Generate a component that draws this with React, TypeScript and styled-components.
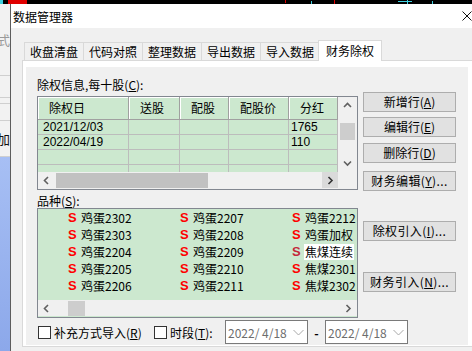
import styled, { createGlobalStyle } from "styled-components";

const GlobalStyle = createGlobalStyle`
  html, body {
    margin: 0;
    padding: 0;
  }
  body {
    width: 472px;
    height: 351px;
    overflow: hidden;
    background: #000;
    font-family: "Noto Sans CJK SC", "Liberation Sans", sans-serif;
    font-size: 12px;
    color: #000;
  }
`;

const Screen = styled.div`
  width: 472px;
  height: 351px;
  display: flex;
  flex-direction: column;
  overflow: hidden;
`;

const Main = styled.div`
  flex: 1;
  display: flex;
  min-height: 0;
`;

/* bit of the app window behind the dialog */
const BackApp = styled.div`
  width: 10px;
  flex: none;
  display: flex;
  flex-direction: column;
  background: #f2f2f2;
  border-right: 1px solid #5c5c5c;
  overflow: hidden;
`;

const BackSeg = styled.div<{ $h: number; $dark?: boolean }>`
  height: ${(p) => p.$h}px;
  flex: none;
  border-bottom: 1px solid #cfcfcf;
  display: flex;
  align-items: center;
  justify-content: flex-end;
  font-size: 13px;
  color: ${(p) => (p.$dark ? "#111" : "#9a9a9a")};
  white-space: nowrap;
`;

const BackBlue = styled.div`
  flex: 1;
  background: linear-gradient(180deg, #a7bff4 0%, #8ca8ea 100%);
`;

const Dialog = styled.div`
  width: 461px;
  flex: none;
  display: flex;
  flex-direction: column;
  background: #f0f0f0;
`;

const TitleBar = styled.div`
  height: 24px;
  flex: none;
  background: #fff;
  display: flex;
  align-items: center;
  justify-content: space-between;
  padding-left: 2px;
  font-size: 12px;
`;

const Body = styled.div`
  flex: 1;
  padding: 12px 0 0 11px;
  display: flex;
  flex-direction: column;
`;

const Tabs = styled.div`
  display: flex;
  align-items: flex-end;
  height: 20px;
  margin-left: 2px;
`;

const Tab = styled.div<{ $active?: boolean }>`
  height: ${(p) => (p.$active ? 21 : 18)}px;
  line-height: ${(p) => (p.$active ? 19 : 17)}px;
  padding: 0 ${(p) => (p.$active ? 7 : 5)}px;
  margin: 0 ${(p) => (p.$active ? -2 : -1)}px ${(p) => (p.$active ? -1 : 0)}px
    ${(p) => (p.$active ? -1 : 0)}px;
  border: 1px solid #d9d9d9;
  border-bottom: none;
  background: ${(p) => (p.$active ? "#fff" : "#f0f0f0")};
  position: relative;
  z-index: ${(p) => (p.$active ? 2 : 1)};
  white-space: nowrap;
  box-sizing: border-box;
`;

const Panel = styled.div`
  height: 287px;
  box-sizing: border-box;
  margin-right: -2px;
  border: 1px solid #d9d9d9;
  background: #fff;
  padding: 6px 5px 1px 3px;
`;

const Page = styled.div`
  height: 278px;
  box-sizing: border-box;
  background: #f0f0f0;
  padding: 9px 0 0 11px;
  display: flex;
  flex-direction: column;
`;

const Upper = styled.div`
  display: flex;
  align-items: flex-start;
`;

const LeftCol = styled.div`
  width: 321px;
  flex: none;
  display: flex;
  flex-direction: column;
`;

const FieldLabel = styled.div<{ $h: number; $lh: number }>`
  height: ${(p) => p.$h}px;
  line-height: ${(p) => p.$lh}px;
  white-space: nowrap;
`;

const GridBox = styled.div`
  height: 94px;
  box-sizing: border-box;
  border: 1px solid #828790;
  background: #cce8cf;
  display: flex;
  flex-direction: column;
`;

const GridTop = styled.div`
  flex: 1;
  display: flex;
  min-height: 0;
`;

const TableArea = styled.div`
  width: 300px;
  flex: none;
  display: flex;
  flex-direction: column;
  overflow: hidden;
`;

const cols = "91px 51px 49px 60px 49px";

const HeaderRow = styled.div`
  display: grid;
  grid-template-columns: ${cols};
  height: 23px;
  flex: none;
  box-sizing: border-box;
  border-bottom: 1px solid #a0a0a0;
`;

const HeaderCell = styled.div`
  border-right: 1px solid #a0a0a0;
  box-shadow: inset 1px 1px 0 #fff;
  padding-left: 11px;
  line-height: 22px;
  white-space: nowrap;
`;

const BodyGrid = styled.div`
  display: grid;
  grid-template-columns: ${cols};
  grid-auto-rows: 15px;
`;

const Cell = styled.div<{ $pad: number }>`
  border-right: 1px solid #bcbcbc;
  border-bottom: 1px solid #bcbcbc;
  padding-left: ${(p) => p.$pad}px;
  line-height: 14px;
  font-family: "Liberation Sans", sans-serif;
  font-size: 12px;
  white-space: nowrap;
`;

const VScroll = styled.div`
  flex: 1;
  background: #f0f0f0;
  display: flex;
  flex-direction: column;
  align-items: center;
`;

const ArrowBox = styled.div<{ $w: number; $h: number; $hot?: boolean }>`
  width: ${(p) => p.$w}px;
  height: ${(p) => p.$h}px;
  flex: none;
  display: flex;
  align-items: center;
  justify-content: center;
  background: ${(p) => (p.$hot ? "#dadada" : "transparent")};
`;

const VThumb = styled.div`
  width: 15px;
  height: 17px;
  margin-top: 9px;
  background: #cdcdcd;
`;

const Spacer = styled.div`
  flex: 1;
`;

const HBar = styled.div<{ $w?: number }>`
  height: 16px;
  flex: none;
  width: ${(p) => (p.$w ? `${p.$w}px` : "auto")};
  background: #f0f0f0;
  display: flex;
  align-items: center;
`;

const GridBottom = styled.div`
  display: flex;
  height: 17px;
  flex: none;
  background: #f0f0f0;
`;

const HThumb = styled.div<{ $ml: number; $w: number; $c: string }>`
  margin-left: ${(p) => p.$ml}px;
  width: ${(p) => p.$w}px;
  height: 15px;
  background: ${(p) => p.$c};
`;

const ListBox = styled.div`
  height: 110px;
  box-sizing: border-box;
  border: 1px solid #828790;
  background: #cce8cf;
  display: flex;
  flex-direction: column;
`;

const ListItems = styled.div`
  height: 91px;
  flex: none;
  overflow: hidden;
  display: grid;
  grid-template-rows: repeat(5, 17px);
  grid-auto-flow: column;
  grid-auto-columns: 112px;
  padding-left: 30px;
`;

const Item = styled.div`
  display: flex;
  align-items: center;
  white-space: nowrap;
`;

const SMark = styled.span<{ $dim?: boolean }>`
  width: 8px;
  margin-right: 5px;
  font-family: "Liberation Sans", sans-serif;
  font-weight: 700;
  font-size: 13px;
  color: ${(p) => (p.$dim ? "#c4283a" : "#ff0000")};
`;

const ItemName = styled.span<{ $sel?: boolean }>`
  height: 16px;
  line-height: 16px;
  padding: 0 1px;
  margin-left: -1px;
  background: ${(p) => (p.$sel ? "#fff" : "transparent")};
`;

const RightCol = styled.div`
  width: 93px;
  margin-left: 5px;
  flex: none;
  display: flex;
  flex-direction: column;
`;

const Button = styled.div<{ $mt: number; $wide?: boolean }>`
  height: 20px;
  box-sizing: border-box;
  margin-top: ${(p) => p.$mt}px;
  border: 1px solid #adadad;
  background: #e1e1e1;
  text-align: center;
  line-height: 18px;
  letter-spacing: ${(p) => (p.$wide ? "0.4px" : "0")};
  white-space: nowrap;
  overflow: hidden;
`;

const BottomRow = styled.div`
  height: 24px;
  margin-top: 2px;
  display: flex;
  align-items: center;
`;

const CheckBox = styled.div`
  width: 13px;
  height: 13px;
  box-sizing: border-box;
  margin-left: 1px;
  border: 1px solid #333;
  background: #fff;
  flex: none;
`;

const CheckLabel = styled.div<{ $w: number }>`
  width: ${(p) => p.$w}px;
  margin-left: 3px;
  white-space: nowrap;
  flex: none;
`;

const DateBox = styled.div`
  width: 83px;
  height: 24px;
  box-sizing: border-box;
  border: 1px solid #7a7a7a;
  background: #fff;
  display: flex;
  align-items: center;
  justify-content: space-between;
  padding: 0 3px 0 2px;
  color: #6d6d6d;
  white-space: pre;
  flex: none;
`;

const Dash = styled.div`
  width: 17px;
  text-align: center;
  font-weight: 700;
  flex: none;
`;

function Chevron({ dir, color = "#606060" }: { dir: "up" | "down" | "left" | "right"; color?: string }) {
  const pts: Record<string, string> = {
    up: "1,5 4.5,1.5 8,5",
    down: "1,1.5 4.5,5 8,1.5",
    left: "5,1 1.5,4.5 5,8",
    right: "1.5,1 5,4.5 1.5,8",
  };
  const horiz = dir === "left" || dir === "right";
  return (
    <svg width={horiz ? 7 : 9} height={horiz ? 9 : 7} viewBox={horiz ? "0 0 7 9" : "0 0 9 7"}>
      <polyline points={pts[dir]} fill="none" stroke={color} strokeWidth="1.6" />
    </svg>
  );
}

function ThinChevron() {
  return (
    <svg width="11" height="7" viewBox="0 0 11 7">
      <polyline points="0.5,1 5.5,6 10.5,1" fill="none" stroke="#a8a8a8" strokeWidth="1" />
    </svg>
  );
}

function TopStrip() {
  return (
    <svg width="472" height="4" style={{ display: "block", flex: "none" }}>
      <rect width="472" height="4" fill="#000" />
      <rect x="0" width="3" height="4" fill="#3fd0e0" />
      <rect x="8" width="19" height="4" fill="#e00000" />
      <rect x="285" width="1" height="3" fill="#e00000" />
      <rect x="334" width="1" height="4" fill="#e00000" />
      <rect x="311" y="1" width="1" height="3" fill="#3fd0e0" />
      <rect x="398" y="1" width="14" height="1" fill="#3fd0e0" />
      <rect x="407" width="1" height="4" fill="#3fd0e0" />
      <rect x="432" y="1" width="1" height="3" fill="#3fd0e0" />
    </svg>
  );
}

const headers = ["除权日", "送股", "配股", "配股价", "分红"];
const rows = [
  ["2021/12/03", "", "", "", "1765"],
  ["2022/04/19", "", "", "", "110"],
  ["", "", "", "", ""],
  ["", "", "", "", ""],
];

const items = [
  "鸡蛋2302", "鸡蛋2303", "鸡蛋2204", "鸡蛋2205", "鸡蛋2206",
  "鸡蛋2207", "鸡蛋2208", "鸡蛋2209", "鸡蛋2210", "鸡蛋2211",
  "鸡蛋2212", "鸡蛋加权", "焦煤连续", "焦煤2301", "焦煤2302",
];

const tabs = ["收盘清盘", "代码对照", "整理数据", "导出数据", "导入数据", "财务除权"];

export default function App() {
  return (
    <Screen>
      <GlobalStyle />
      <TopStrip />
      <Main>
        <BackApp>
          <BackSeg $h={71}>方式</BackSeg>
          <BackSeg $h={21} />
          <BackSeg $h={5} />
          <BackSeg $h={16} />
          <BackSeg $h={35} $dark>增加</BackSeg>
          <BackBlue />
        </BackApp>
        <Dialog>
          <TitleBar>
            <span>数据管理器</span>
            <svg width="10" height="10" viewBox="0 0 10 10">
              <path d="M0.5 0.5 L9.5 9.5 M9.5 0.5 L0.5 9.5" stroke="#111" strokeWidth="1" />
            </svg>
          </TitleBar>
          <Body>
            <Tabs>
              {tabs.map((t, i) => (
                <Tab key={t} $active={i === tabs.length - 1}>
                  {t}
                </Tab>
              ))}
            </Tabs>
            <Panel>
              <Page>
                <Upper>
                  <LeftCol>
                    <FieldLabel $h={20} $lh={17}>
                      除权信息,每十股(<u>C</u>):
                    </FieldLabel>
                    <GridBox>
                      <GridTop>
                        <TableArea>
                          <HeaderRow>
                            {headers.map((h) => (
                              <HeaderCell key={h}>{h}</HeaderCell>
                            ))}
                          </HeaderRow>
                          <BodyGrid>
                            {rows.map((r, ri) =>
                              r.map((c, ci) => (
                                <Cell key={`${ri}-${ci}`} $pad={ci === 0 ? 5 : 2}>
                                  {c}
                                </Cell>
                              ))
                            )}
                          </BodyGrid>
                        </TableArea>
                        <VScroll>
                          <ArrowBox $w={17} $h={17}>
                            <Chevron dir="up" />
                          </ArrowBox>
                          <VThumb />
                          <Spacer />
                          <ArrowBox $w={17} $h={17}>
                            <Chevron dir="down" />
                          </ArrowBox>
                        </VScroll>
                      </GridTop>
                      <GridBottom>
                        <HBar $w={300}>
                          <ArrowBox $w={17} $h={16}>
                            <Chevron dir="left" />
                          </ArrowBox>
                          <HThumb $ml={1} $w={152} $c="#c1c1c1" />
                          <Spacer />
                          <ArrowBox $w={16} $h={16} $hot>
                            <Chevron dir="right" color="#333" />
                          </ArrowBox>
                        </HBar>
                      </GridBottom>
                    </GridBox>
                    <FieldLabel $h={18} $lh={21}>
                      品种(<u>S</u>):
                    </FieldLabel>
                    <ListBox>
                      <ListItems>
                        {items.map((n) => (
                          <Item key={n}>
                            <SMark $dim={n === "焦煤连续"}>S</SMark>
                            <ItemName $sel={n === "焦煤连续"}>{n}</ItemName>
                          </Item>
                        ))}
                      </ListItems>
                      <HBar>
                        <ArrowBox $w={17} $h={16}>
                          <Chevron dir="left" />
                        </ArrowBox>
                        <HThumb $ml={13} $w={17} $c="#cdcdcd" />
                        <Spacer />
                        <ArrowBox $w={17} $h={16}>
                          <Chevron dir="right" />
                        </ArrowBox>
                      </HBar>
                    </ListBox>
                  </LeftCol>
                  <RightCol>
                    <Button $mt={16}>新增行(<u>A</u>)</Button>
                    <Button $mt={5}>编辑行(<u>E</u>)</Button>
                    <Button $mt={6}>删除行(<u>D</u>)</Button>
                    <Button $mt={8} $wide>财务编辑(<u>Y</u>)...</Button>
                    <Button $mt={30} $wide>除权引入(<u>I</u>)...</Button>
                    <Button $mt={31} $wide>财务引入(<u>N</u>)...</Button>
                  </RightCol>
                </Upper>
                <BottomRow>
                  <CheckBox />
                  <CheckLabel $w={99}>补充方式导入(<u>R</u>)</CheckLabel>
                  <CheckBox />
                  <CheckLabel $w={55}>时段(<u>T</u>):</CheckLabel>
                  <DateBox>
                    <span>2022/ 4/18</span>
                    <ThinChevron />
                  </DateBox>
                  <Dash>-</Dash>
                  <DateBox>
                    <span>2022/ 4/18</span>
                    <ThinChevron />
                  </DateBox>
                </BottomRow>
              </Page>
            </Panel>
          </Body>
        </Dialog>
      </Main>
    </Screen>
  );
}
